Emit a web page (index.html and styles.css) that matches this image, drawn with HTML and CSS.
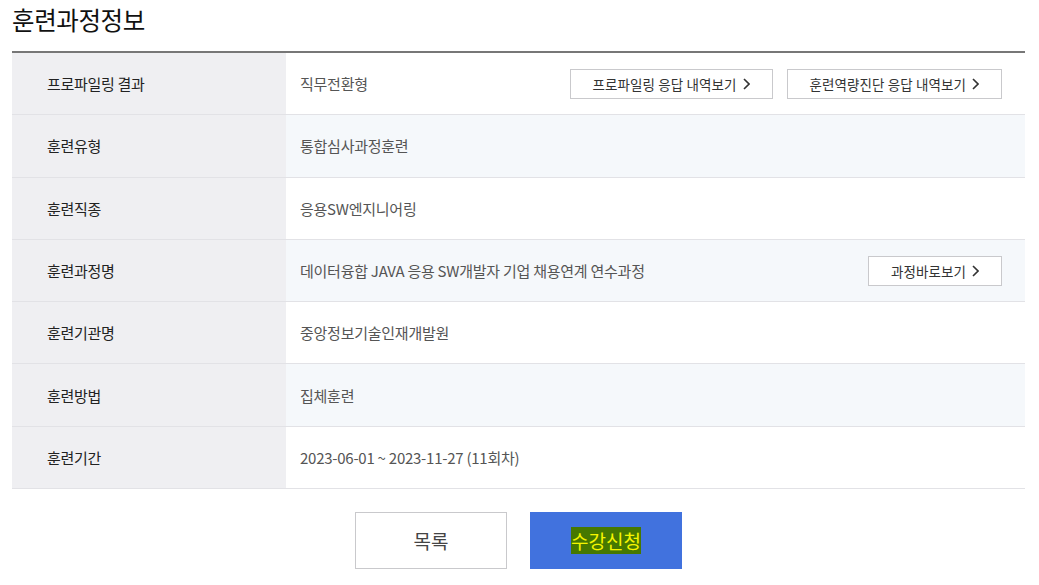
FILE: index.html
```html
<!DOCTYPE html>
<html>
<head>
  <meta charset="utf-8">
  <meta name="viewport" content="width=device-width, initial-scale=1.0">
  <link rel="stylesheet" href="styles.css">
</head>
<body>

<h2 class="sec_title">훈련과정정보</h2>

<div class="info_table">
  <div class="info_row">
    <div class="info_label">프로파일링 결과</div>
    <div class="info_value">
      <span>직무전환형</span>
      <div class="btn_group">
        <a class="line_btn">프로파일링 응답 내역보기 <svg class="arr" viewBox="0 0 7 12"><path d="M1 1l5 5-5 5" /></svg></a>
        <a class="line_btn">훈련역량진단 응답 내역보기 <svg class="arr" viewBox="0 0 7 12"><path d="M1 1l5 5-5 5" /></svg></a>
      </div>
    </div>
  </div>
  <div class="info_row">
    <div class="info_label">훈련유형</div>
    <div class="info_value alt">통합심사과정훈련</div>
  </div>
  <div class="info_row">
    <div class="info_label">훈련직종</div>
    <div class="info_value">응용SW엔지니어링</div>
  </div>
  <div class="info_row">
    <div class="info_label">훈련과정명</div>
    <div class="info_value alt">
      <span>데이터융합 JAVA 응용 SW개발자 기업 채용연계 연수과정</span>
      <div class="btn_group">
        <a class="line_btn">과정바로보기 <svg class="arr" viewBox="0 0 7 12"><path d="M1 1l5 5-5 5" /></svg></a>
      </div>
    </div>
  </div>
  <div class="info_row">
    <div class="info_label">훈련기관명</div>
    <div class="info_value">중앙정보기술인재개발원</div>
  </div>
  <div class="info_row">
    <div class="info_label">훈련방법</div>
    <div class="info_value alt">집체훈련</div>
  </div>
  <div class="info_row">
    <div class="info_label">훈련기간</div>
    <div class="info_value">2023-06-01 ~ 2023-11-27 (11회차)</div>
  </div>
</div>

<div class="bottom_btns">
  <a class="big_btn list_btn">목록</a>
  <a class="big_btn apply_btn"><span class="hl">수강신청</span></a>
</div>

</body>
</html>
```

FILE: styles.css
```css
body {
  margin: 0;
  padding: 0 14px 0 12px;
  font-family: "Noto Sans CJK KR", "Noto Sans", sans-serif;
  color: #222;
  background: #fff;
}

.sec_title {
  margin: 0;
  height: 51px;
  line-height: 40px;
  font-size: 24.5px;
  font-weight: 400;
  color: #111;
  letter-spacing: -0.4px;
}

.info_table {
  border-top: 2px solid #777;
}

.info_row {
  display: flex;
  height: 61.3px;
  border-bottom: 1px solid #e2e2e6;
}

.info_label {
  width: 239px;
  flex: none;
  padding-left: 35px;
  background: #efeff2;
  display: flex;
  align-items: center;
  font-size: 15px;
  color: #222;
  letter-spacing: -0.3px;
}

.info_value {
  flex: 1;
  display: flex;
  align-items: center;
  justify-content: space-between;
  padding: 0 23px 0 14px;
  font-size: 15px;
  color: #555;
  letter-spacing: -0.25px;
}

.info_value.alt {
  background: #f5f8fb;
}

.btn_group {
  display: flex;
  gap: 14px;
}

.line_btn {
  display: flex;
  align-items: center;
  justify-content: center;
  gap: 6px;
  height: 28px;
  padding: 0 22px;
  border: 1px solid #c9c9cc;
  background: #fff;
  font-size: 13.5px;
  color: #333;
  letter-spacing: 0.1px;
}

.arr {
  width: 7px;
  height: 12px;
  fill: none;
  stroke: #333;
  stroke-width: 1.6;
}

.bottom_btns {
  display: flex;
  justify-content: center;
  gap: 23px;
  margin-top: 23px;
}

.big_btn {
  display: flex;
  align-items: center;
  justify-content: center;
  width: 152px;
  height: 57px;
  box-sizing: border-box;
  font-size: 19px;
}

.list_btn {
  border: 1px solid #c9c9cc;
  color: #444;
}

.apply_btn {
  background: #4172de;
  color: #fff;
}

.hl {
  background: #467800;
  color: #f5f500;
}
```
